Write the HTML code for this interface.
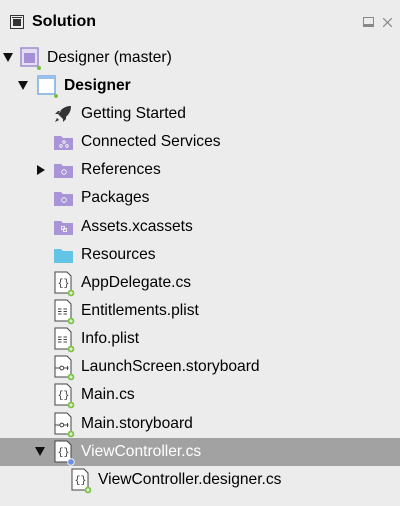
<!DOCTYPE html>
<html><head><style>
body{margin:0;width:400px;height:506px;background:#ececec;font-family:"Liberation Sans",sans-serif;overflow:hidden;position:relative;color:#000}
.r{position:absolute;left:0;width:400px;height:28px}
.t{position:absolute;top:5px;font-size:15.6px;line-height:18px;white-space:nowrap}
.a{position:absolute;top:9px;width:0;height:0;border-left:5px solid transparent;border-right:5px solid transparent;border-top:9px solid #111}
.ar{position:absolute;top:9px;width:0;height:0;border-top:5px solid transparent;border-bottom:5px solid transparent;border-left:8px solid #111}
svg{position:absolute}
.sel{background:#a2a2a2}
.sel .t{color:#fff}
</style></head><body>
<svg style="left:10px;top:15px" width="14" height="14"><rect x="0.5" y="0.5" width="13" height="13" fill="none" stroke="#333"/><rect x="3" y="4" width="8" height="7" fill="#333"/><rect x="2" y="2" width="10" height="1" fill="#333"/></svg>
<div style="position:absolute;left:32px;top:13px;font-size:16px;font-weight:bold;line-height:18px">Solution</div>
<svg style="left:363px;top:17px" width="11" height="11"><rect x="0.5" y="0.5" width="10" height="9" fill="none" stroke="#888"/><rect x="1" y="7" width="9" height="2" fill="#888"/></svg>
<svg style="left:383px;top:18px" width="9" height="9"><path d="M0 0L9 9M9 0L0 9" stroke="#888" stroke-width="1.2"/></svg>

<div class="r" style="top:44px"><div class="a" style="left:3px"></div>
<svg style="left:20px;top:3px" width="24" height="24"><rect x="1" y="1" width="17" height="18" fill="#e4def2" stroke="#a08ccc" stroke-width="1.5"/><rect x="4" y="6" width="11" height="10" fill="#a58fd6"/><circle cx="19" cy="21" r="2" fill="#7ac143"/></svg>
<div class="t" style="left:47px">Designer (master)</div></div>

<div class="r" style="top:72px"><div class="a" style="left:18px"></div>
<svg style="left:37px;top:3px" width="24" height="24"><rect x="1" y="1" width="17" height="18" fill="#fff" stroke="#7aaae0" stroke-width="1.5"/><rect x="1" y="1" width="17" height="3" fill="#9cc0ea"/><circle cx="19" cy="21" r="2" fill="#7ac143"/></svg>
<div class="t" style="left:64px;font-weight:bold">Designer</div></div>

<div class="r" style="top:100px">
<svg style="left:54px;top:5px" width="18" height="18"><path d="M17 1C11 1 7 4 4 9L9 14C14 11 17 7 17 1Z M4 9L1 9L4 6L7 6Z M9 14L9 17L12 14L12 11Z M3 13L1 17L5 15Z" fill="#333"/></svg>
<div class="t" style="left:81px">Getting Started</div></div>

<div class="r" style="top:128px">
<svg style="left:54px;top:6px" width="20" height="16"><path d="M0 2h7l2 2h10v12H0z" fill="#a994d8"/><circle cx="10" cy="8" r="1.3" fill="none" stroke="#fff" stroke-width=".8"/><circle cx="7" cy="12" r="1.3" fill="none" stroke="#fff" stroke-width=".8"/><circle cx="13" cy="12" r="1.3" fill="none" stroke="#fff" stroke-width=".8"/></svg>
<div class="t" style="left:81px">Connected Services</div></div>

<div class="r" style="top:156px"><div class="ar" style="left:37px"></div>
<svg style="left:54px;top:6px" width="20" height="16"><path d="M0 2h7l2 2h10v12H0z" fill="#a994d8"/><circle cx="10" cy="10" r="2.3" fill="none" stroke="#fff" stroke-width=".8"/></svg>
<div class="t" style="left:81px">References</div></div>

<div class="r" style="top:184px">
<svg style="left:54px;top:6px" width="20" height="16"><path d="M0 2h7l2 2h10v12H0z" fill="#a994d8"/><circle cx="10" cy="10" r="2.3" fill="none" stroke="#fff" stroke-width=".8"/></svg>
<div class="t" style="left:81px">Packages</div></div>

<div class="r" style="top:213px">
<svg style="left:54px;top:6px" width="20" height="16"><path d="M0 2h7l2 2h10v12H0z" fill="#a994d8"/><rect x="7.5" y="7.5" width="3" height="3" fill="none" stroke="#fff" stroke-width=".8"/><rect x="9.5" y="9.5" width="3" height="3" fill="none" stroke="#fff" stroke-width=".8"/></svg>
<div class="t" style="left:81px">Assets.xcassets</div></div>

<div class="r" style="top:241px">
<svg style="left:54px;top:6px" width="20" height="16"><path d="M0 2h7l2 2h10v12H0z" fill="#63c5e6"/></svg>
<div class="t" style="left:81px">Resources</div></div>

<div class="r" style="top:269px">
<svg style="left:54px;top:2px" width="22" height="26"><path d="M1 1h12l4 4v17H1z" fill="#fff" stroke="#444"/><text x="3.5" y="15" font-size="10" font-family="Liberation Mono" fill="#333">{}</text><circle cx="17" cy="22" r="3.3" fill="#7ac143"/><path d="M15.2 22h3.6M17 20.2v3.6" stroke="#fff" stroke-width="1"/></svg>
<div class="t" style="left:81px">AppDelegate.cs</div></div>

<div class="r" style="top:297px">
<svg style="left:54px;top:2px" width="22" height="26"><path d="M1 1h12l4 4v17H1z" fill="#fff" stroke="#444"/><path d="M4 10h3.5M9.5 10h3.5M4 12.5h3.5M9.5 12.5h3.5M4 15h3.5M9.5 15h3.5" stroke="#444"/><circle cx="17" cy="22" r="3.3" fill="#7ac143"/><path d="M15.2 22h3.6M17 20.2v3.6" stroke="#fff" stroke-width="1"/></svg>
<div class="t" style="left:81px">Entitlements.plist</div></div>

<div class="r" style="top:325px">
<svg style="left:54px;top:2px" width="22" height="26"><path d="M1 1h12l4 4v17H1z" fill="#fff" stroke="#444"/><path d="M4 10h3.5M9.5 10h3.5M4 12.5h3.5M9.5 12.5h3.5M4 15h3.5M9.5 15h3.5" stroke="#444"/><circle cx="17" cy="22" r="3.3" fill="#7ac143"/><path d="M15.2 22h3.6M17 20.2v3.6" stroke="#fff" stroke-width="1"/></svg>
<div class="t" style="left:81px">Info.plist</div></div>

<div class="r" style="top:353px">
<svg style="left:54px;top:2px" width="22" height="26"><path d="M1 1h12l4 4v17H1z" fill="#fff" stroke="#444"/><path d="M1 13h4.5M10 13h4.5M13.5 11v4" stroke="#444"/><circle cx="7.8" cy="13" r="1.9" fill="none" stroke="#444"/><circle cx="17" cy="22" r="3.3" fill="#7ac143"/><path d="M15.2 22h3.6M17 20.2v3.6" stroke="#fff" stroke-width="1"/></svg>
<div class="t" style="left:81px">LaunchScreen.storyboard</div></div>

<div class="r" style="top:381px">
<svg style="left:54px;top:2px" width="22" height="26"><path d="M1 1h12l4 4v17H1z" fill="#fff" stroke="#444"/><text x="3.5" y="15" font-size="10" font-family="Liberation Mono" fill="#333">{}</text><circle cx="17" cy="22" r="3.3" fill="#7ac143"/><path d="M15.2 22h3.6M17 20.2v3.6" stroke="#fff" stroke-width="1"/></svg>
<div class="t" style="left:81px">Main.cs</div></div>

<div class="r" style="top:410px">
<svg style="left:54px;top:2px" width="22" height="26"><path d="M1 1h12l4 4v17H1z" fill="#fff" stroke="#444"/><path d="M1 13h4.5M10 13h4.5M13.5 11v4" stroke="#444"/><circle cx="7.8" cy="13" r="1.9" fill="none" stroke="#444"/><circle cx="17" cy="22" r="3.3" fill="#7ac143"/><path d="M15.2 22h3.6M17 20.2v3.6" stroke="#fff" stroke-width="1"/></svg>
<div class="t" style="left:81px">Main.storyboard</div></div>

<div class="r sel" style="top:438px"><div class="a" style="left:35px"></div>
<svg style="left:54px;top:2px" width="22" height="26"><path d="M1 1h12l4 4v17H1z" fill="#fff" stroke="#444"/><text x="3.5" y="15" font-size="10" font-family="Liberation Mono" fill="#333">{}</text><circle cx="17" cy="22" r="3.3" fill="#6d8fe6" stroke="#fff" stroke-width=".8"/></svg>
<div class="t" style="left:81px">ViewController.cs</div></div>

<div class="r" style="top:466px">
<svg style="left:71px;top:2px" width="22" height="26"><path d="M1 1h12l4 4v17H1z" fill="#fff" stroke="#444"/><text x="3.5" y="15" font-size="10" font-family="Liberation Mono" fill="#333">{}</text><circle cx="17" cy="22" r="3.3" fill="#7ac143"/><path d="M15.2 22h3.6M17 20.2v3.6" stroke="#fff" stroke-width="1"/></svg>
<div class="t" style="left:98px">ViewController.designer.cs</div></div>
</body></html>
